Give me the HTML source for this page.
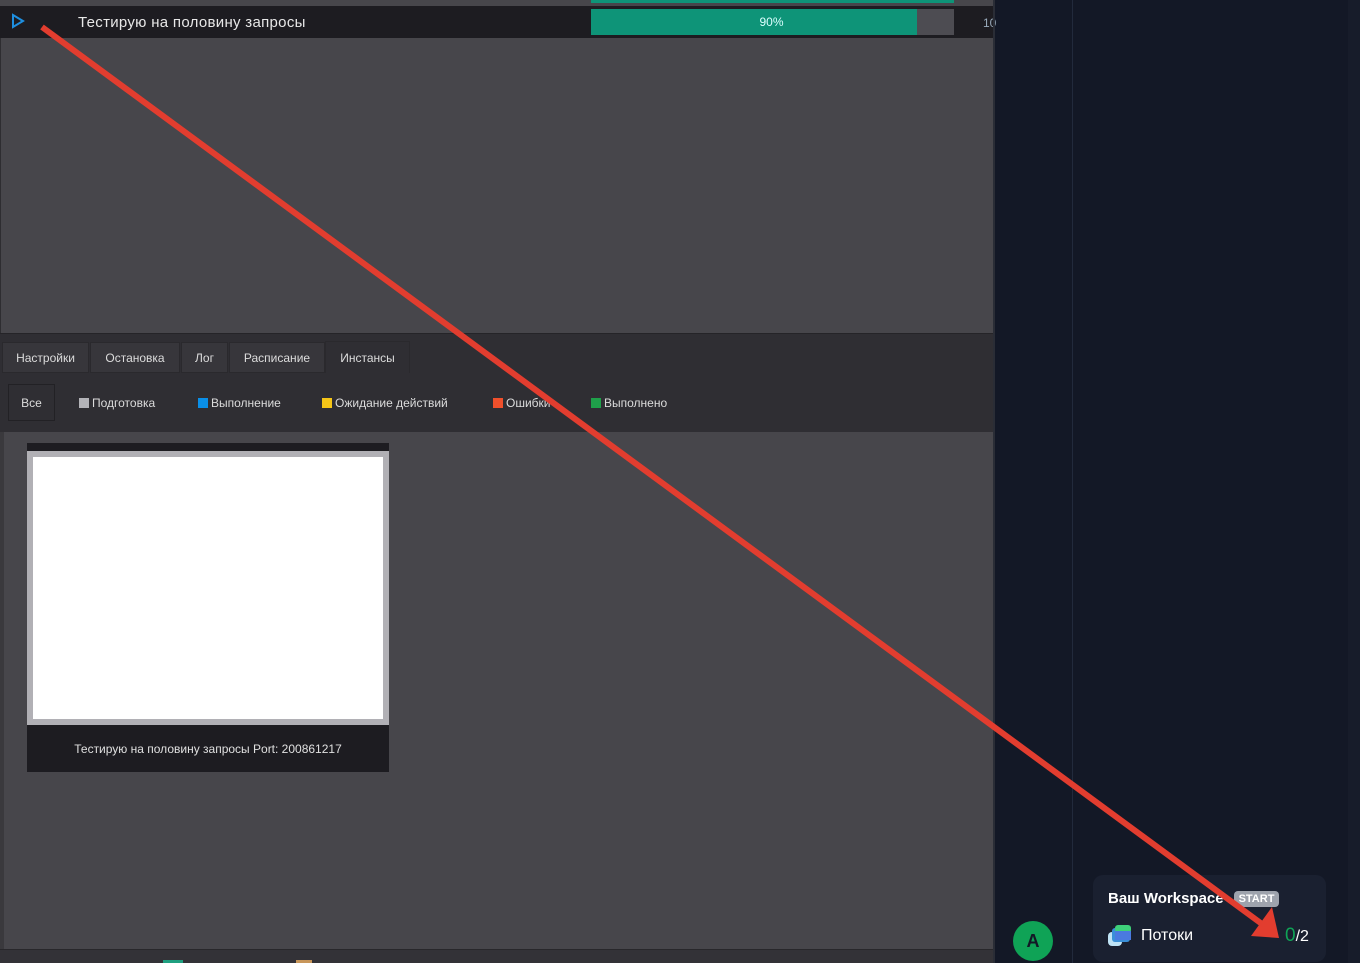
<!DOCTYPE html>
<html><head><meta charset="utf-8"><style>
*{margin:0;padding:0;box-sizing:border-box}
body{width:1360px;height:963px;overflow:hidden;background:#131826;position:relative;font-family:"Liberation Sans","DejaVu Sans",sans-serif}
.left{position:absolute;left:0;top:0;width:993px;height:963px;background:#47464b}
.abs{position:absolute}
.tab{position:absolute;top:342px;height:31px;background:#37363b;border:1px solid #2a292d;color:#dcdcdc;font-size:12px;line-height:30px;text-align:center}
.flt{position:absolute;top:396px;font-size:12px;color:#dcdcdc;line-height:14px}
.sq{display:inline-block;width:10px;height:10px;margin-right:3px;vertical-align:-1px}
</style></head><body>
<div class="left">
  <div class="abs" style="left:591px;top:0;width:363px;height:3px;background:#0e9478"></div>
  <div class="abs" style="left:0;top:6px;width:993px;height:32px;background:#1d1c21"></div>
  <svg class="abs" style="left:11px;top:13px" width="14" height="16"><path d="M2 2 L12 8 L2 14 Z" fill="none" stroke="#1e8fe0" stroke-width="2"/></svg>
  <div class="abs" style="left:78px;top:14px;color:#e8e8e8;font-size:15px;letter-spacing:0.3px">Тестирую на половину запросы</div>
  <div class="abs" style="left:591px;top:9px;width:363px;height:26px;background:#4d4c52"></div>
  <div class="abs" style="left:591px;top:9px;width:326px;height:26px;background:#0e9478;color:#dff;font-size:12px;text-align:center;line-height:27px;padding-left:35px">90%</div>
  <div class="abs" style="left:983px;top:16px;color:#9ab;font-size:12px">10</div>
  <div class="abs" style="left:0;top:38px;width:1px;height:296px;background:#2e2d31"></div>
  <div class="abs" style="left:0;top:333px;width:993px;height:10px;background:#2f2e33;border-top:1px solid #252428"></div>
  <div class="abs" style="left:0;top:342px;width:993px;height:32px;background:#2f2e33"></div>
  <div class="tab" style="left:2px;width:87px">Настройки</div>
  <div class="tab" style="left:90px;width:90px">Остановка</div>
  <div class="tab" style="left:181px;width:47px">Лог</div>
  <div class="tab" style="left:229px;width:96px">Расписание</div>
  <div class="tab" style="left:325px;width:85px;top:341px;height:33px;background:#2f2e33;line-height:32px">Инстансы</div>
  <div class="abs" style="left:0;top:373px;width:993px;height:59px;background:#2f2e33"></div>
  <div class="abs" style="left:8px;top:384px;width:47px;height:37px;border:1px solid #222125;color:#dcdcdc;font-size:12px;text-align:center;line-height:36px">Все</div>
  <div class="flt" style="left:79px"><span class="sq" style="background:#b3b3b8"></span>Подготовка</div>
  <div class="flt" style="left:198px"><span class="sq" style="background:#0a8fe8"></span>Выполнение</div>
  <div class="flt" style="left:322px"><span class="sq" style="background:#f5c518"></span>Ожидание действий</div>
  <div class="flt" style="left:493px"><span class="sq" style="background:#f0502c"></span>Ошибки</div>
  <div class="flt" style="left:591px"><span class="sq" style="background:#1fa04a"></span>Выполнено</div>
  <div class="abs" style="left:0;top:432px;width:4px;height:520px;background:#3a393d"></div>
  <div class="abs" style="left:27px;top:443px;width:362px;height:329px;background:#1d1c21"></div>
  <div class="abs" style="left:27px;top:451px;width:362px;height:274px;background:#b1b0b5"></div>
  <div class="abs" style="left:33px;top:457px;width:350px;height:262px;background:#fff"></div>
  <div class="abs" style="left:27px;top:742px;width:362px;text-align:center;color:#e0e0e0;font-size:12px">Тестирую на половину запросы Port: 200861217</div>
  <div class="abs" style="left:0;top:949px;width:993px;height:14px;background:#333237;border-top:1px solid #28272b"></div>
  <div class="abs" style="left:163px;top:960px;width:20px;height:3px;background:#1fa080"></div>
  <div class="abs" style="left:296px;top:960px;width:16px;height:3px;background:#c8965a"></div>
</div>
<div class="abs" style="left:993px;top:0;width:2px;height:963px;background:#2a2d36"></div>
<div class="abs" style="left:1072px;top:0;width:1px;height:963px;background:#222a3c"></div>
<div class="abs" style="left:1348px;top:0;width:12px;height:963px;background:#171c2a"></div>
<div class="abs" style="left:1013px;top:921px;width:40px;height:40px;border-radius:50%;background:#0fa356;color:#131826;font-weight:bold;font-size:18px;text-align:center;line-height:40px">A</div>
<div class="abs" style="left:1093px;top:875px;width:233px;height:87px;background:#1a2030;border-radius:10px"></div>
<div class="abs" style="left:1108px;top:890px;color:#fff;font-size:15px;font-weight:bold">Ваш Workspace</div>
<div class="abs" style="left:1234px;top:891px;width:45px;height:16px;border-radius:4px;background:#9ea3ad;color:#fff;font-size:11px;font-weight:bold;text-align:center;line-height:16px">START</div>
<svg class="abs" style="left:1108px;top:925px" width="24" height="22"><rect x="0" y="7" width="14" height="14" rx="4" fill="#bfe3f5"/><rect x="4" y="3" width="18" height="14" rx="3" fill="#3a8fd8"/><rect x="7" y="0" width="16" height="8" rx="3" fill="#3ed07a"/><rect x="7" y="6" width="16" height="9" fill="#4a7ae0"/></svg>
<div class="abs" style="left:1141px;top:927px;color:#fff;font-size:16px">Потоки</div>
<div class="abs" style="left:1285px;top:925px;font-size:16px;color:#fff"><span style="color:#0fa356;font-size:19px">0</span>/2</div>
<svg class="abs" style="left:0;top:0" width="1360" height="963">
  <line x1="42" y1="27" x2="1262" y2="924" stroke="#e23d2f" stroke-width="6"/>
  <polygon points="1279,938 1251,936 1272,907" fill="#e23d2f"/>
</svg>
</body></html>
